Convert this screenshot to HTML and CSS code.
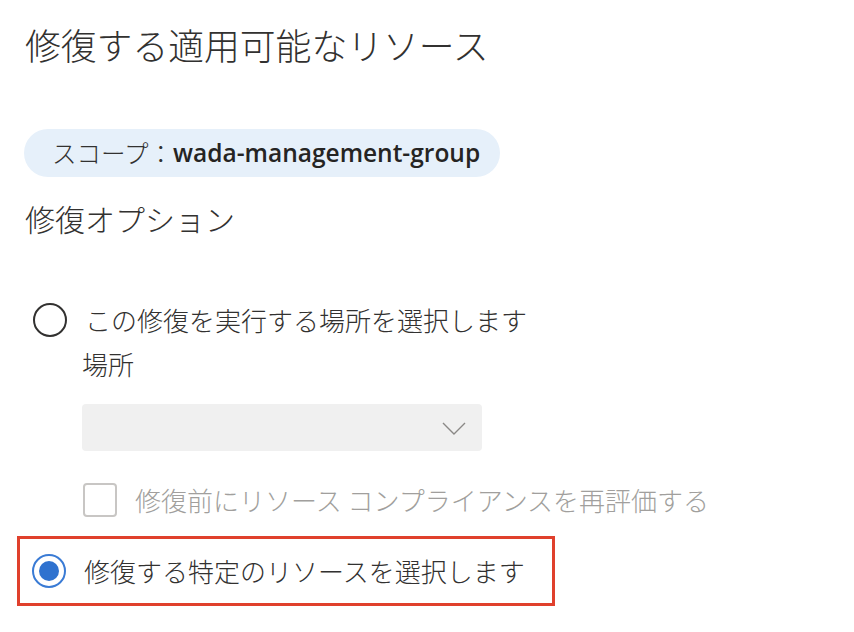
FILE: index.html
```html
<!DOCTYPE html>
<html lang="ja">
<head>
<meta charset="utf-8">
<title>修復する適用可能なリソース</title>
<link rel="stylesheet" href="styles.css">
</head>
<body>
<div class="page">
  <h1 class="title">修復する適用可能なリソース</h1>
  <div class="scope"><span class="scope-label">スコープ：</span><span class="scope-value">wada-management-group</span></div>
  <h2 class="section">修復オプション</h2>

  <div class="option">
    <span class="radio"></span>
    <span class="option-text">この修復を実行する場所を選択します</span>
  </div>
  <div class="field-label">場所</div>
  <div class="dropdown">
    <svg class="chevron" width="24" height="14" viewBox="0 0 24 14"><path d="M1 1 L12 12 L23 1" fill="none" stroke="#8a8886" stroke-width="1.4"/></svg>
  </div>
  <div class="check-row">
    <span class="checkbox"></span>
    <span class="check-text">修復前にリソース コンプライアンスを再評価する</span>
  </div>

  <div class="option option-selected">
    <span class="radio radio-on"><span class="dot"></span></span>
    <span class="option-text">修復する特定のリソースを選択します</span>
  </div>
</div>
</body>
</html>
```
FILE: styles.css
```css
* { box-sizing: border-box; }
html, body { margin: 0; padding: 0; background: #ffffff; }
body {
  font-family: "Noto Sans CJK JP", "Noto Sans", sans-serif;
  font-weight: 300;
  color: #323130;
}
.page {
  padding: 22px 0 0 24px;
  width: 854px;
  height: 632px;
  overflow: hidden;
}
.title {
  margin: 0 0 0 1px;
  font-size: 35.8px;
  line-height: 44px;
  font-weight: 300;
  color: #323130;
}
.scope {
  display: inline-flex;
  align-items: center;
  margin-top: 63px;
  height: 48px;
  padding: 0 20px 0 28px;
  border-radius: 24px;
  background: #e6f0fa;
  font-size: 24.5px;
  line-height: 48px;
  white-space: nowrap;
}
.scope-label { color: #323130; }
.scope-value {
  font-family: "Open Sans", "Noto Sans", sans-serif;
  font-weight: 600;
  font-size: 24.5px;
  color: #252423;
}
.section {
  margin: 21px 0 0 1px;
  font-size: 30px;
  line-height: 40px;
  font-weight: 300;
}
.option {
  display: flex;
  align-items: center;
  height: 40px;
  margin-top: 62px;
  padding-left: 9px;
}
.radio {
  width: 34px;
  height: 34px;
  border: 2px solid #323130;
  border-radius: 50%;
  flex: none;
  display: flex;
  align-items: center;
  justify-content: center;
}
.radio-on { border-color: #3a7bd5; }
.dot {
  width: 20px;
  height: 20px;
  border-radius: 50%;
  background: #2f72cf;
}
.option-text {
  margin-left: 18px;
  font-size: 26px;
  line-height: 40px;
  white-space: nowrap;
}
.field-label {
  margin: 6px 0 0 58px;
  font-size: 26px;
  line-height: 36px;
}
.dropdown {
  margin: 22px 0 0 58px;
  width: 400px;
  height: 47px;
  border-radius: 4px;
  background: #f0f0f0;
  display: flex;
  align-items: center;
  justify-content: flex-end;
  padding-right: 16px;
}
.chevron { display: block; margin-top: 2px; }
.check-row {
  display: flex;
  align-items: center;
  height: 34px;
  margin: 32px 0 0 59px;
}
.checkbox {
  width: 34px;
  height: 34px;
  border: 2px solid #c8c6c4;
  border-radius: 4px;
  flex: none;
}
.check-text {
  margin-left: 18px;
  font-size: 26px;
  line-height: 34px;
  color: #a19f9d;
  white-space: nowrap;
}
.option-selected {
  margin: 19px 0 0 -7px;
  width: 538px;
  height: 70px;
  border: 3px solid #e0402c;
  padding-left: 12px;
}
```
